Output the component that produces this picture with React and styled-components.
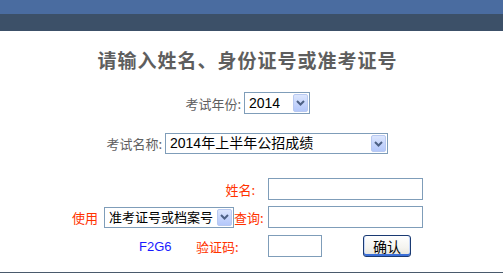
import React from "react";
import styled, { createGlobalStyle } from "styled-components";

const GlobalStyle = createGlobalStyle`
  html, body {
    margin: 0;
    padding: 0;
    background: #fff;
  }
  body {
    width: 503px;
    height: 273px;
    overflow: hidden;
    font-family: "Liberation Sans", "Noto Sans CJK SC", sans-serif;
  }
`;

const cjk = `"Noto Sans CJK SC", "Liberation Sans", sans-serif`;

const Page = styled.div`
  display: flex;
  flex-direction: column;
  width: 503px;
  height: 273px;
`;

const TopBar = styled.div`
  height: 14px;
  background: #4a6ca0;
`;

const SubBar = styled.div`
  height: 17px;
  background: #3c5068;
`;

const Main = styled.div`
  display: flex;
  flex-direction: column;
  flex: 1;
  border-bottom: 1px solid #4a5a6c;
`;

const Title = styled.h2`
  margin: 19px 8px 0 0;
  height: 20px;
  line-height: 20px;
  text-align: center;
  font-family: ${cjk};
  font-size: 19px;
  font-weight: 700;
  color: #5e5e5e;
  letter-spacing: 1px;
`;

const Row = styled.div`
  display: flex;
  align-items: center;
  margin-top: ${(p) => p.$top}px;
  height: ${(p) => p.$h || 21}px;
`;

const Label = styled.span`
  display: inline-block;
  flex-shrink: 0;
  width: ${(p) => (p.$w ? `${p.$w}px` : "auto")};
  text-align: ${(p) => p.$align || "left"};
  padding-right: ${(p) => p.$pr || 0}px;
  box-sizing: border-box;
  font-family: ${cjk};
  font-size: 13px;
  line-height: 21px;
  color: ${(p) => (p.$red ? "#ff3300" : "#5f5f5f")};
  white-space: nowrap;
`;

const SelectBox = styled.div`
  display: flex;
  flex-shrink: 0;
  align-items: center;
  justify-content: space-between;
  box-sizing: border-box;
  width: ${(p) => p.$w}px;
  height: ${(p) => p.$h || 21}px;
  margin-left: ${(p) => p.$ml || 0}px;
  border: 1px solid #7f9db9;
  background: #fff;
  padding: 1px 1px 1px 4px;
`;

const SelectText = styled.span`
  overflow: hidden;
  font-family: "Liberation Sans", "Noto Sans CJK SC", sans-serif;
  font-size: ${(p) => p.$fs || 14}px;
  color: #000;
  white-space: nowrap;
  line-height: 17px;
`;

const ArrowBtn = styled.span`
  display: flex;
  flex-shrink: 0;
  align-items: center;
  justify-content: center;
  width: 15px;
  height: 100%;
  box-sizing: border-box;
  border: 1px solid #b8c9f1;
  border-radius: 2px;
  background: linear-gradient(180deg, #dce6fd 0%, #c3d3fc 60%, #b4c8fb 100%);
`;

const Input = styled.div`
  box-sizing: border-box;
  flex-shrink: 0;
  width: ${(p) => p.$w}px;
  height: 22px;
  border: 1px solid #7f9db9;
  background: #fff;
`;

const Code = styled.span`
  display: inline-block;
  width: 57px;
  font-family: "Liberation Sans", sans-serif;
  font-size: 13px;
  color: #1a1aff;
  line-height: 21px;
`;

const Button = styled.button`
  box-sizing: border-box;
  width: 48px;
  height: 22px;
  margin-left: 41px;
  margin-top: -1px;
  padding: 0;
  border: 1px solid #1a3a72;
  border-radius: 3px;
  background: linear-gradient(180deg, #ffffff 0%, #f4f3ee 60%, #e3e2da 100%);
  box-shadow: inset 0 -2px 0 #3b6fd8, inset 1px 0 0 #c8d8f8, inset -1px 0 0 #c8d8f8;
  font-family: ${cjk};
  font-size: 14px;
  line-height: 18px;
  color: #000;
`;

const Grid = styled.div`
  display: grid;
  grid-template-columns: 263px 1fr;
  column-gap: 5px;
  align-items: center;
  margin-top: ${(p) => p.$top}px;
`;

const Cell = styled.div`
  display: flex;
  align-items: center;
  padding-left: ${(p) => p.$pl || 0}px;
  justify-content: ${(p) => p.$justify || "flex-start"};
`;

const Chevron = () => (
  <svg width="9" height="6" viewBox="0 0 9 6">
    <path d="M1 1 L4.5 4.5 L8 1" fill="none" stroke="#4d6185" strokeWidth="2" />
  </svg>
);

const Select = ({ w, h, ml, fs, children }) => (
  <SelectBox $w={w} $h={h} $ml={ml}>
    <SelectText $fs={fs}>{children}</SelectText>
    <ArrowBtn>
      <Chevron />
    </ArrowBtn>
  </SelectBox>
);

export default function App() {
  return (
    <>
      <GlobalStyle />
      <Page>
        <TopBar />
        <SubBar />
        <Main>
          <Title>请输入姓名、身份证号或准考证号</Title>

          <Row $top={22} $h={22}>
            <Label $w={241} $align="right">考试年份:</Label>
            <Select w={66} h={22} ml={3}>2014</Select>
          </Row>

          <Row $top={19}>
            <Label $w={162} $align="right">考试名称:</Label>
            <Select w={223} ml={3}>2014年上半年公招成绩</Select>
          </Row>

          <Grid $top={24}>
            <Cell $justify="flex-end">
              <Label $red $pr={8}>姓名:</Label>
            </Cell>
            <Input $w={155} />
          </Grid>

          <Grid $top={6}>
            <Cell $pl={72}>
              <Label $red $w={32}>使用</Label>
              <Select w={130} fs={13}>准考证号或档案号</Select>
              <Label $red>查询:</Label>
            </Cell>
            <Input $w={155} />
          </Grid>

          <Grid $top={7}>
            <Cell $pl={139}>
              <Code>F2G6</Code>
              <Label $red>验证码:</Label>
            </Cell>
            <Cell>
              <Input $w={54} />
              <Button>确认</Button>
            </Cell>
          </Grid>
        </Main>
      </Page>
    </>
  );
}
